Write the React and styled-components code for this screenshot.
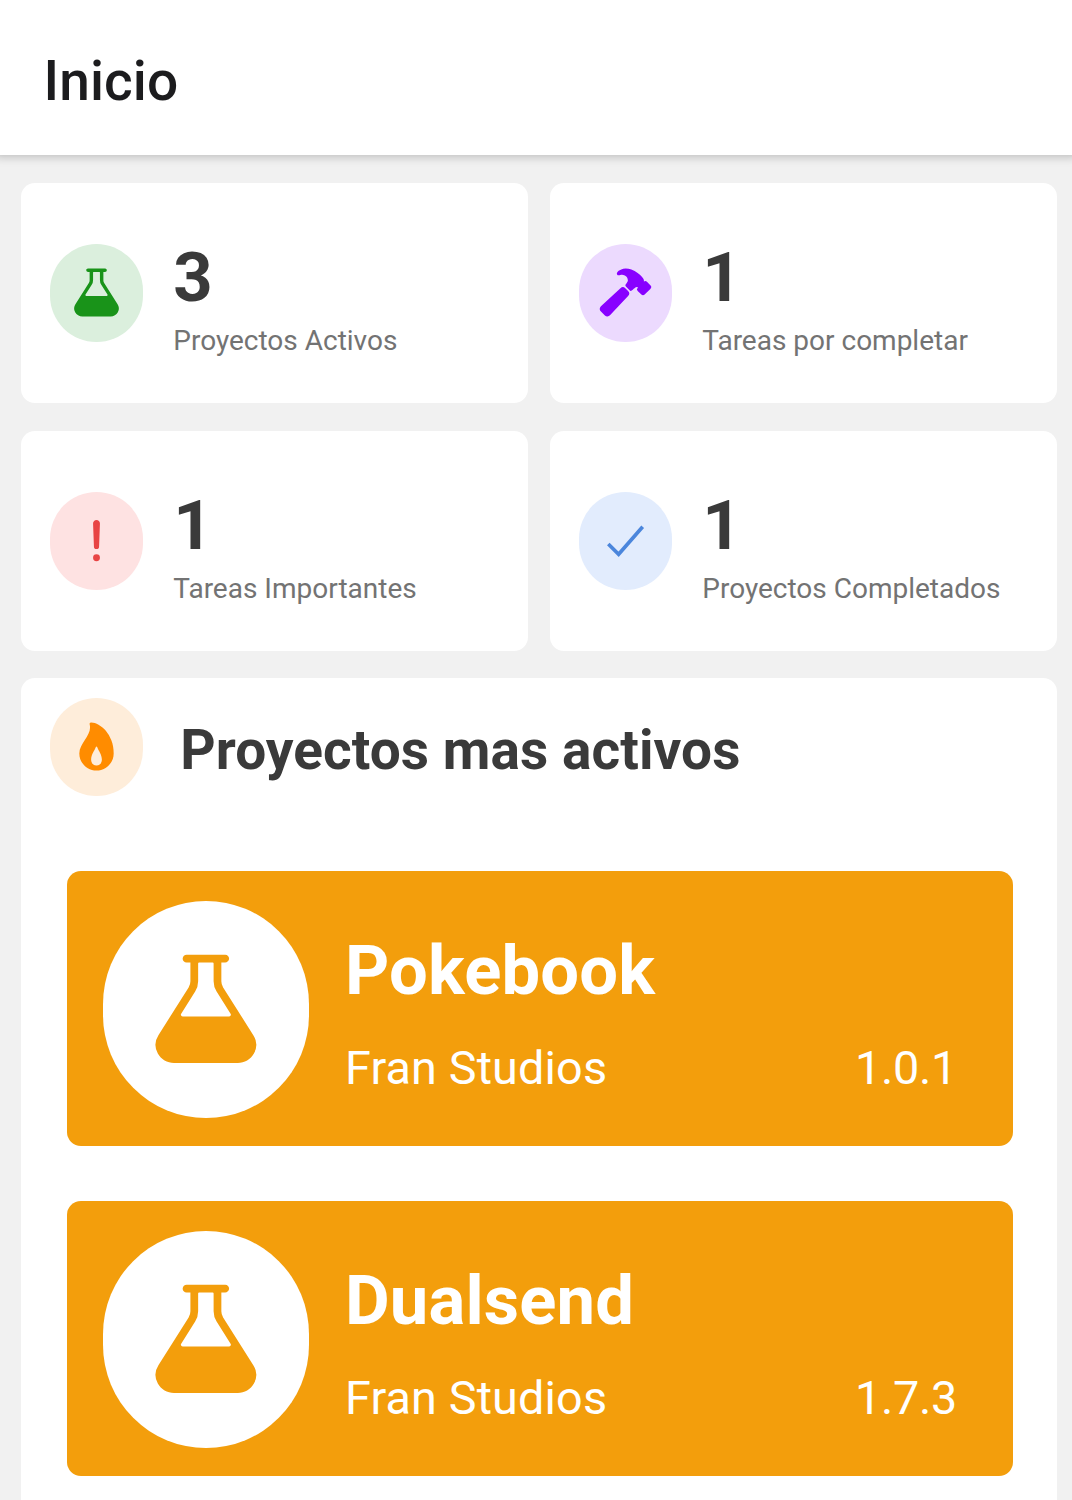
import React from "react";
import styled, { createGlobalStyle } from "styled-components";
import { IoFlask, IoHammer, IoAlert } from "react-icons/io5";

const GlobalStyle = createGlobalStyle`
  * { box-sizing: border-box; }
  body {
    margin: 0;
    background: #f1f1f1;
    font-family: Roboto, "Liberation Sans", sans-serif;
  }
`;

const Screen = styled.div`
  display: flex;
  flex-direction: column;
  height: 1500px;
  overflow: hidden;
`;

const Header = styled.header`
  flex: none;
  display: flex;
  align-items: center;
  height: 155px;
  padding: 6px 43.5px 0;
  background: #fff;
  box-shadow: 0 -3px 9px 5px rgba(0, 0, 0, 0.22);
`;

const Title = styled.h1`
  margin: 0;
  font-size: 55px;
  font-weight: 500;
  line-height: 66px;
  letter-spacing: 0.1px;
  color: #1c1c1e;
`;

const Content = styled.main`
  display: flex;
  flex-direction: column;
  gap: 27px;
  padding: 28px 15px 0 21px;
`;

const Stats = styled.section`
  display: grid;
  grid-template-columns: repeat(2, 507px);
  grid-auto-rows: 220px;
  gap: 28px 22px;
`;

const StatCard = styled.article`
  display: flex;
  align-items: center;
  gap: 30px;
  padding: 0 29px;
  background: #fff;
  border-radius: 14px;
`;

const Badge = styled.div`
  flex: none;
  display: flex;
  align-items: center;
  justify-content: center;
  width: ${(p) => (p.$large ? 206 : 93.25)}px;
  height: ${(p) => (p.$large ? 217 : 97.5)}px;
  padding-bottom: ${(p) => (p.$lift ? 2 : 0)}px;
  border-radius: 999px;
  background: ${(p) => p.$bg};
  color: ${(p) => p.$color};
  font-size: ${(p) => (p.$large ? 123.75 : 55)}px;

  svg { display: block; }
`;

const StatText = styled.div`
  display: flex;
  flex-direction: column;
  padding-top: 7px;
`;

const StatValue = styled.span`
  font-size: 68.75px;
  font-weight: 700;
  line-height: 81px;
  color: #3a3a3a;
`;

const StatLabel = styled.span`
  font-size: 28px;
  line-height: 33px;
  margin-top: 6px;
  white-space: nowrap;
  color: #737373;
`;

const Panel = styled.section`
  height: 900px;
  background: #fff;
  border-radius: 14px;
`;

const PanelHeader = styled.div`
  display: flex;
  align-items: center;
  gap: 37px;
  padding: 20px 29px 0;
`;

const PanelTitle = styled.h2`
  margin: 0;
  padding-top: 6px;
  font-size: 55px;
  font-weight: 700;
  line-height: 66px;
  letter-spacing: 0.06px;
  color: #3a3a3a;
`;

const Projects = styled.div`
  display: flex;
  flex-direction: column;
  gap: 55px;
  padding: 75px 44px 0 46px;
`;

const ProjectCard = styled.article`
  display: flex;
  align-items: center;
  gap: 36px;
  height: 275px;
  padding: 2px 56px 0 36px;
  background: #f39e0c;
  border-radius: 14px;
  color: #fff;
`;

const ProjectInfo = styled.div`
  flex: 1;
  display: flex;
  flex-direction: column;
  gap: 30px;
  padding-top: 8px;
`;

const ProjectName = styled.h3`
  margin: 0;
  font-size: 68.75px;
  font-weight: 700;
  line-height: 81px;
  letter-spacing: 0.15px;
`;

const ProjectMeta = styled.div`
  display: flex;
  justify-content: space-between;
  font-size: 46.75px;
  line-height: 55px;
`;

const Owner = styled.span`
  letter-spacing: 0.15px;
`;

const Version = styled.span`
  letter-spacing: -0.3px;
`;

function Check() {
  return (
    <svg width="1em" height="1em" viewBox="0 0 512 512" fill="none" stroke="currentColor" strokeWidth="34">
      <polyline points="416 128 192 384 96 288" />
    </svg>
  );
}

function Flame() {
  return (
    <svg width="1em" height="1em" viewBox="0 0 512 512" fill="currentColor" fillRule="evenodd">
      <path d="M394.23 197.56a300.43 300.43 0 0 0-53.37-90C301.2 61.65 249.05 32 208 32a16 16 0 0 0-15.48 20c13.87 53-14.88 97.07-45.27 143.72C122 234.36 96 274.27 96 320c0 88.22 71.78 160 160 160s160-71.78 160-160c0-43.3-7.32-84.49-21.77-122.44ZM249 262C253 253 259 253 263 262C274 294 306 328 306 378C306 412 287 432 256 432S206 412 206 378C206 328 238 294 249 262Z" />
    </svg>
  );
}

const stats = [
  { icon: IoFlask, value: 3, label: "Proyectos Activos", bg: "#dbefdd", color: "#199319" },
  { icon: IoHammer, value: 1, label: "Tareas por completar", bg: "#ecdafe", color: "#8800ff" },
  { icon: IoAlert, value: 1, label: "Tareas Importantes", bg: "#fee2e2", color: "#e84444" },
  { icon: Check, value: 1, label: "Proyectos Completados", bg: "#e2ecfd", color: "#4b86dc" },
];

const projects = [
  { name: "Pokebook", owner: "Fran Studios", version: "1.0.1" },
  { name: "Dualsend", owner: "Fran Studios", version: "1.7.3" },
];

export default function App() {
  return (
    <Screen>
      <GlobalStyle />
      <Header>
        <Title>Inicio</Title>
      </Header>
      <Content>
        <Stats>
          {stats.map(({ icon: Icon, value, label, bg, color }) => (
            <StatCard key={label}>
              <Badge $lift $bg={bg} $color={color}>
                <Icon />
              </Badge>
              <StatText>
                <StatValue>{value}</StatValue>
                <StatLabel>{label}</StatLabel>
              </StatText>
            </StatCard>
          ))}
        </Stats>
        <Panel>
          <PanelHeader>
            <Badge $bg="#feedda" $color="#ff8c00">
              <Flame />
            </Badge>
            <PanelTitle>Proyectos mas activos</PanelTitle>
          </PanelHeader>
          <Projects>
            {projects.map(({ name, owner, version }) => (
              <ProjectCard key={name}>
                <Badge $large $bg="#fff" $color="#f39e0c">
                  <IoFlask />
                </Badge>
                <ProjectInfo>
                  <ProjectName>{name}</ProjectName>
                  <ProjectMeta>
                    <Owner>{owner}</Owner>
                    <Version>{version}</Version>
                  </ProjectMeta>
                </ProjectInfo>
              </ProjectCard>
            ))}
          </Projects>
        </Panel>
      </Content>
    </Screen>
  );
}
